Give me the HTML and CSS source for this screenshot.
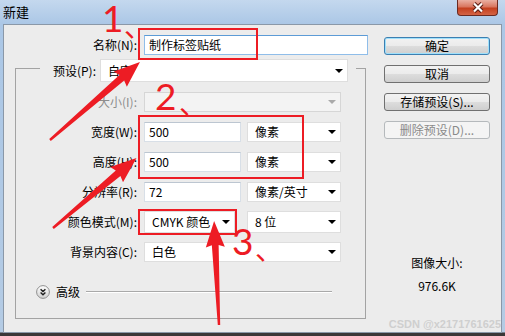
FILE: index.html
```html
<!DOCTYPE html>
<html lang="zh">

<head>
    <meta charset="UTF-8">
    <title>新建</title>
    <link rel="stylesheet" href="styles.css">
</head>

<body>
    <div class="window">
        <div class="titlebar">
            <span class="title">新建</span>
            <button class="closeBtn">
                <svg width="14" height="11" viewBox="0 0 14 11">
                    <path d="M3 1.5 L11 9.5 M11 1.5 L3 9.5" stroke="#5b1c12" stroke-width="4.2" fill="none"/>
                    <path d="M3 1.5 L11 9.5 M11 1.5 L3 9.5" stroke="#fff" stroke-width="2.2" fill="none"/>
                </svg>
            </button>
        </div>
        <div class="client">
            <div class="formCol">
                <div class="row nameRow">
                    <span class="lbl">名称(N):</span>
                    <div class="field nameField">制作标签贴纸</div>
                </div>
                <fieldset class="group">
                    <legend class="presetRow">
                        <span class="presetLbl">预设(P):</span>
                        <div class="select presetSelect">自定</div>
                    </legend>
                    <div class="row off">
                        <span class="lbl">大小(I):</span>
                        <div class="select wide"></div>
                    </div>
                    <div class="row">
                        <span class="lbl">宽度(W):</span>
                        <div class="field num">500</div>
                        <div class="select unit">像素</div>
                    </div>
                    <div class="row">
                        <span class="lbl">高度(H):</span>
                        <div class="field num">500</div>
                        <div class="select unit">像素</div>
                    </div>
                    <div class="row">
                        <span class="lbl">分辨率(R):</span>
                        <div class="field num">72</div>
                        <div class="select unit">像素/英寸</div>
                    </div>
                    <div class="row tall">
                        <span class="lbl">颜色模式(M):</span>
                        <div class="select mode">CMYK 颜色</div>
                        <div class="select unit">8 位</div>
                    </div>
                    <div class="row bg">
                        <span class="lbl">背景内容(C):</span>
                        <div class="select wide">白色</div>
                    </div>
                    <div class="advRow">
                        <svg class="advIcon" width="14" height="14" viewBox="0 0 14 14">
                            <defs>
                                <linearGradient id="advFill" x1="0" y1="0" x2="0" y2="1">
                                    <stop offset="0" stop-color="#ffffff"/>
                                    <stop offset="1" stop-color="#cfcfcf"/>
                                </linearGradient>
                            </defs>
                            <circle cx="7" cy="7" r="6.4" fill="url(#advFill)" stroke="#8f8f8f"/>
                            <path d="M4.6 4.3 L7 6.6 L9.4 4.3 M4.6 7.4 L7 9.7 L9.4 7.4" fill="none" stroke="#1e1e1e" stroke-width="1.4"/>
                        </svg>
                        <span class="advText">高级</span>
                        <span class="rule"></span>
                    </div>
                </fieldset>
            </div>
            <div class="sideCol">
                <button class="btn primary">确定</button>
                <button class="btn">取消</button>
                <button class="btn">存储预设(S)...</button>
                <button class="btn" disabled>删除预设(D)...</button>
                <div class="sizeInfo">
                    <div>图像大小:</div>
                    <div>976.6K</div>
                </div>
            </div>
        </div>

        <!-- annotations drawn over the screenshot -->
        <svg class="marks" width="505" height="336" viewBox="0 0 505 336">
            <g fill="none" stroke="#ed1c24" stroke-width="2">
                <rect x="139" y="29" width="118" height="30"/>
                <rect x="139" y="116" width="164" height="62"/>
                <rect x="139" y="210" width="97" height="24"/>
            </g>
            <g fill="#ed1c24">
                <path transform="translate(50 140) rotate(-40.9)" d="M0 -1.2 L95 -3.6 L93 -10 L119 0 L93 10 L95 3.6 L0 1.2 Z"/>
                <path transform="translate(53 228) rotate(-40)" d="M0 -1.2 L85 -3.6 L83 -10 L109 0 L83 10 L85 3.6 L0 1.2 Z"/>
                <path transform="translate(219 325) rotate(-92.7)" d="M0 -1.2 L80 -3.4 L78 -9.5 L104 0 L78 9.5 L80 3.4 L0 1.2 Z"/>
            </g>
            <g class="markText" fill="#ed1c24">
                <text x="102" y="32" class="digit">1</text>
                <text x="124" y="37" class="comma">、</text>
                <text x="155" y="110" class="digit">2</text>
                <text x="179" y="114" class="comma">、</text>
                <text x="232" y="255" class="digit">3</text>
                <text x="255" y="260" class="comma">、</text>
            </g>
        </svg>
        <span class="watermark">CSDN @x2171761625</span>
    </div>
</body>

</html>
```

FILE: styles.css
```css
body {
    margin: 0;
}

.window {
    width: 505px;
    height: 336px;
    position: relative;
    overflow: hidden;
    background: linear-gradient(to bottom, #c4d8ee 0, #abc7e6 24px, #b4cbe4 332px, #3b3737 333px);
    font-family: "Noto Sans CJK SC", "Noto Sans", sans-serif;
    font-size: 12px;
    color: #000;
}

.titlebar {
    height: 24px;
    display: flex;
    justify-content: space-between;
    align-items: flex-start;
    padding: 0 7px 0 3px;
    box-sizing: border-box;
}

.title {
    font-size: 13px;
    line-height: 23px;
}

.closeBtn {
    width: 41px;
    height: 16px;
    padding: 0;
    border: 1px solid #6b2a21;
    border-top: none;
    border-radius: 0 0 4px 4px;
    background: linear-gradient(to bottom, #eab0a2 0, #d9765f 45%, #c4401f 55%, #d46445 100%);
    display: flex;
    align-items: center;
    justify-content: center;
}

.client {
    margin: 0 3px;
    height: 309px;
    box-sizing: border-box;
    border: 1px solid #8a98a8;
    background: #ececec;
    display: flex;
}

.formCol {
    width: 370px;
    flex-shrink: 0;
}

.row {
    display: flex;
    align-items: center;
    height: 20px;
    margin-top: 10px;
}

.lbl {
    width: 121px;
    margin-right: 7px;
    text-align: right;
    line-height: 20px;
    flex-shrink: 0;
    white-space: nowrap;
}

.nameRow .lbl {
    width: 133px;
}

.field {
    height: 20px;
    box-sizing: border-box;
    background: #fff;
    border: 1px solid #d8dfe7;
    border-top-color: #bcc6d1;
    padding: 0 4px;
    line-height: 18px;
}

.nameField {
    width: 224px;
    border-color: #8fbde9;
    border-top-color: #5c9bd6;
}

.num {
    width: 97px;
    margin-right: 6px;
}

.select {
    position: relative;
    height: 20px;
    box-sizing: border-box;
    background: #fff;
    border: 1px solid #dedede;
    padding: 0 16px 0 7px;
    line-height: 18px;
    white-space: nowrap;
}

.select::after {
    content: "";
    position: absolute;
    right: 4px;
    top: 50%;
    margin-top: -2px;
    border-left: 4px solid transparent;
    border-right: 4px solid transparent;
    border-top: 4px solid #000;
}

.unit {
    width: 94px;
}

.wide {
    width: 197px;
}

.mode {
    width: 91px;
    margin-right: 12px;
}

.row.tall {
    height: 22px;
    margin-top: 9px;
}

.row.tall .select {
    height: 22px;
    line-height: 20px;
}

.row.bg {
    margin-top: 9px;
}

.off .lbl {
    color: #8d8d8d;
}

.off .select {
    background: #f3f3f3;
    border-color: #d6d6d6;
}

.off .select::after {
    border-top-color: #a9a9a9;
}

.group {
    margin: 0 0 0 11px;
    padding: 0 0 18px 0;
    width: 351px;
    min-width: 0;
    box-sizing: border-box;
    border: 1px solid #a3a3a3;
}

.presetRow {
    display: flex;
    align-items: center;
    margin-left: 24px;
    padding: 4px 8px 0 8px;
}

.presetLbl {
    width: 48px;
    margin-right: 4px;
    text-align: right;
    white-space: nowrap;
}

.presetSelect {
    width: 248px;
    height: 23px;
    line-height: 21px;
}

.advRow {
    display: flex;
    align-items: center;
    height: 16px;
    margin-top: 22px;
    padding-left: 20px;
}

.advIcon {
    flex-shrink: 0;
}

.advText {
    margin-left: 6px;
    line-height: 16px;
}

.rule {
    width: 246px;
    margin-left: 6px;
    border-top: 1px solid #a9a9a9;
    border-bottom: 1px solid #fff;
}

.sideCol {
    display: flex;
    flex-direction: column;
    gap: 10px;
    padding: 12px 0 0 10px;
}

.btn {
    width: 106px;
    height: 18px;
    box-sizing: border-box;
    padding: 0;
    border: 1px solid #707070;
    border-radius: 3px;
    background: linear-gradient(to bottom, #f2f2f2 0, #ebebeb 50%, #dddddd 50%, #cfcfcf 100%);
    font-family: inherit;
    font-size: 12px;
    line-height: 16px;
    color: #000;
}

.btn.primary {
    border-color: #3c7fb1;
    box-shadow: inset 0 0 0 1px #9fe0fb;
}

.btn:disabled {
    border-color: #b5b9bc;
    background: #f4f4f4;
    color: #8a8a8a;
}

.sizeInfo {
    margin-top: 102px;
    width: 106px;
    text-align: center;
    line-height: 23px;
}

.marks {
    position: absolute;
    left: 0;
    top: 0;
    pointer-events: none;
}

.digit {
    font-family: Lato, "Liberation Sans", sans-serif;
    font-weight: 400;
    font-size: 37px;
}

.comma {
    font-family: "Noto Sans CJK SC", sans-serif;
    font-size: 28px;
}

.watermark {
    position: absolute;
    right: 4px;
    top: 318px;
    font-family: "Liberation Sans", sans-serif;
    font-weight: bold;
    font-size: 11px;
    color: #cfcfcf;
}
```
